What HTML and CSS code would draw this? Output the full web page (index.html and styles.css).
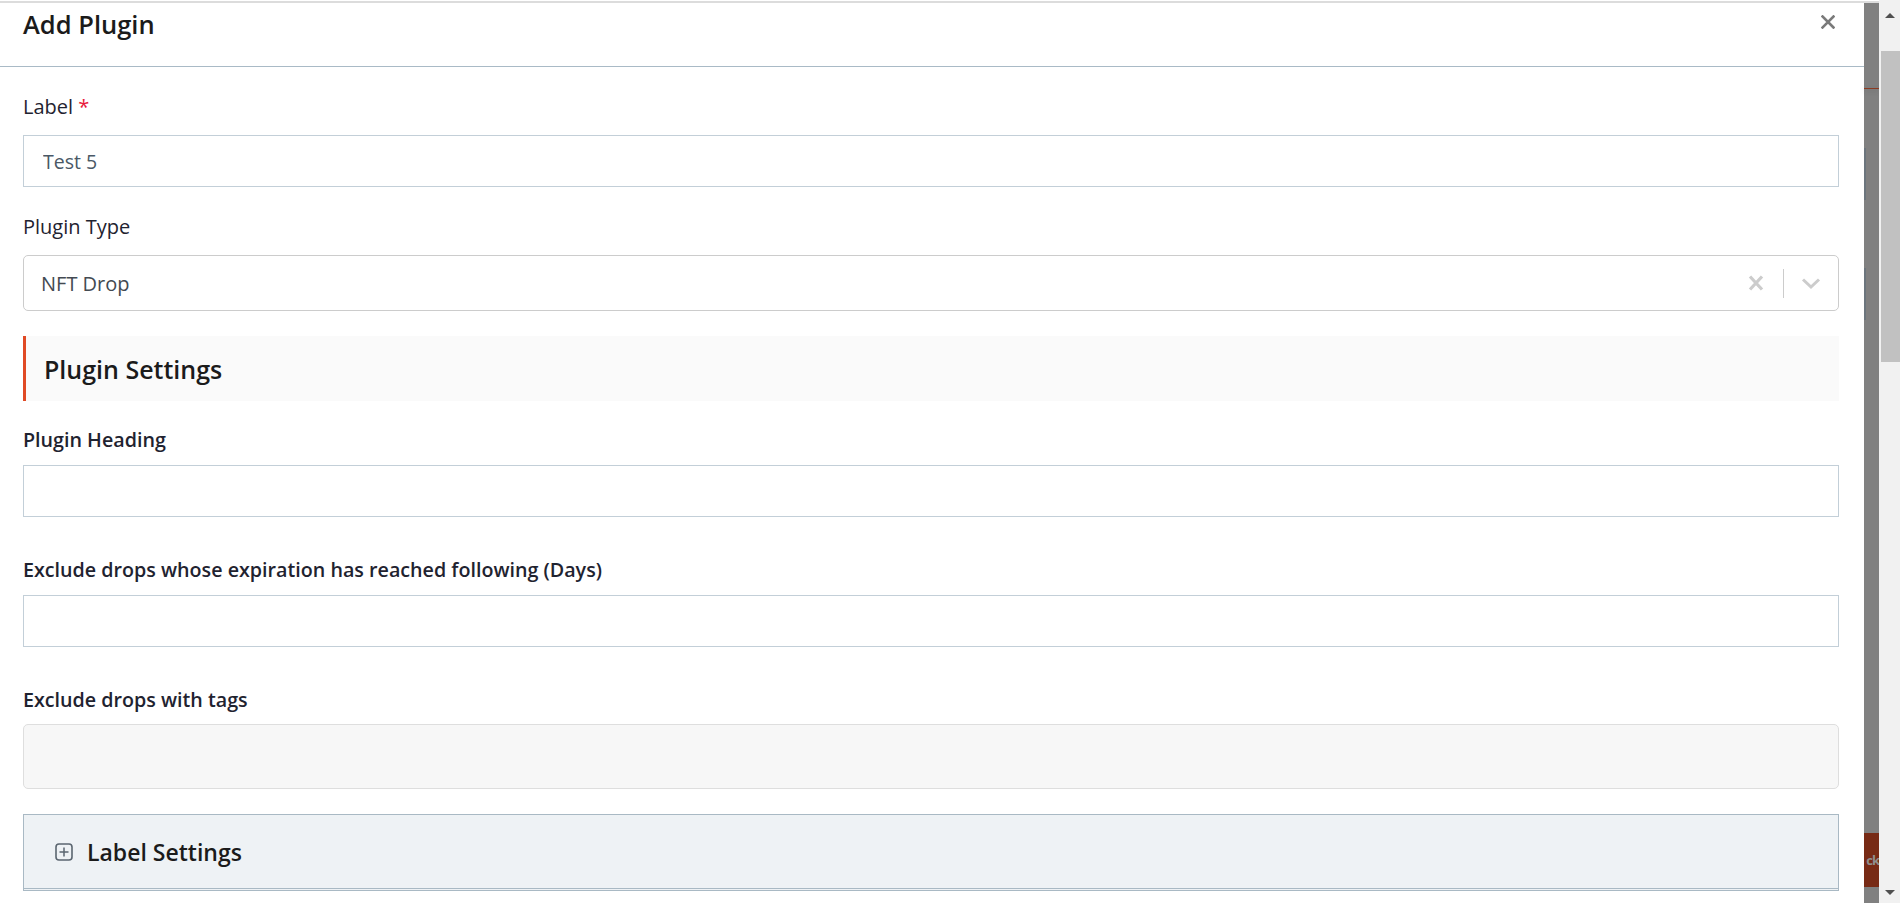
FILE: index.html
```html
<!DOCTYPE html>
<html lang="en">
<head>
    <meta charset="UTF-8">
    <meta name="viewport" content="width=device-width, initial-scale=1.0">
    <title>Add Plugin</title>
    <link rel="stylesheet" href="styles.css">
</head>
<body>
    <div class="screen">
        <div class="viewport">
            <div class="topline"></div>
            <div class="stage">
                <div class="modal">
                    <div class="modal-header">
                        <h5 class="modal-title">Add Plugin</h5>
                        <button type="button" class="close" aria-label="Close">
                            <svg width="14" height="14" viewBox="0 0 14 14"><path d="M1.5 1.5 L12.5 12.5 M12.5 1.5 L1.5 12.5" stroke="#7a7a7a" stroke-width="2.6" stroke-linecap="square"/></svg>
                        </button>
                    </div>

                    <div class="modal-body">
                        <div class="field">
                            <label for="label">Label <span class="required">*</span></label>
                            <input type="text" id="label" class="form-control" value="Test 5">
                        </div>

                        <div class="field">
                            <label>Plugin Type</label>
                            <div class="select">
                                <div class="select-value">NFT Drop</div>
                                <div class="select-indicators">
                                    <svg width="20" height="20" viewBox="0 0 20 20"><path d="M4 3.5 L16 16.5 M16 3.5 L4 16.5" stroke="#cccccc" stroke-width="3.2"/></svg>
                                    <span class="select-sep"></span>
                                    <svg width="20" height="20" viewBox="0 0 20 20"><path d="M2 6.5 L10 14 L18 6.5" fill="none" stroke="#cccccc" stroke-width="3"/></svg>
                                </div>
                            </div>
                        </div>

                        <div class="section-title">Plugin Settings</div>

                        <div class="settings">
                            <div class="field setting">
                                <label for="heading">Plugin Heading</label>
                                <input type="text" id="heading" class="form-control">
                            </div>
                            <div class="field setting">
                                <label for="days">Exclude drops whose expiration has reached following (Days)</label>
                                <input type="text" id="days" class="form-control">
                            </div>
                            <div class="field setting">
                                <label>Exclude drops with tags</label>
                                <div class="tags-box"></div>
                            </div>
                        </div>

                        <div class="panel">
                            <svg class="panel-icon" width="18" height="18" viewBox="0 0 18 18"><rect x="1" y="1" width="16" height="16" rx="3" fill="none" stroke="#5b6670" stroke-width="1.6"/><path d="M9 4.5 V13.5 M4.5 9 H13.5" stroke="#5b6670" stroke-width="1.5"/></svg>
                            <span class="panel-title">Label Settings</span>
                        </div>
                    </div>
                </div>

                <!-- pagina de fondo tapada por el overlay -->
                <div class="backdrop">
                    <div class="bg-rule"></div>
                    <div class="bg-box first"></div>
                    <div class="bg-box"></div>
                    <div class="bg-button"><span>ck</span></div>
                </div>
            </div>
        </div>

        <div class="scrollbar">
            <div class="sb-arrow up"></div>
            <div class="sb-thumb"></div>
            <div class="sb-track"></div>
            <div class="sb-arrow down"></div>
        </div>
    </div>
</body>
</html>
```

FILE: styles.css
```css
/* Estilos del modal "Add Plugin" */
body {
    margin: 0;
    padding: 0;
    overflow: hidden;
    font-family: "Open Sans", "Noto Sans", Arial, sans-serif;
    color: #1f2330;
    background: #fff;
}
.screen {
    display: flex;
    width: 1900px;
    height: 903px;
}
.viewport {
    width: 1879px;
    flex: none;
    display: flex;
    flex-direction: column;
}
.topline {
    height: 3px;
    box-sizing: border-box;
    border-top: 1px solid #fff;
    background: #dcdcdc;
}
.stage {
    flex: 1;
    display: flex;
    overflow: hidden;
}
.modal {
    width: 1864px;
    flex: none;
    background: #fff;
}
.modal-header {
    display: flex;
    justify-content: space-between;
    align-items: flex-start;
    height: 63px;
    box-sizing: content-box;
    padding: 0 29px 0 23px;
    border-bottom: 1px solid #a9bac6;
}
.modal-title {
    margin: 6px 0 0;
    font-size: 25.5px;
    line-height: 30px;
    font-weight: 600;
    color: #1b1b1b;
}
.close {
    margin-top: 12px;
    padding: 0;
    border: none;
    background: none;
    line-height: 0;
    cursor: pointer;
}
.modal-body {
    padding: 25px 25px 0 23px;
}
.field {
    margin-bottom: 25px;
}
label {
    display: block;
    margin-bottom: 13px;
    font-size: 20px;
    line-height: 30px;
    color: #1f2330;
}
.required {
    color: #e8173a;
}
.form-control {
    display: block;
    width: 100%;
    height: 52px;
    box-sizing: border-box;
    margin: 0;
    padding: 0 19px;
    border: 1px solid #c3cfd8;
    border-radius: 0;
    font-family: inherit;
    font-size: 19.5px;
    color: #4a5866;
    outline: none;
}
.select {
    display: flex;
    align-items: center;
    height: 56px;
    box-sizing: border-box;
    border: 1px solid #cccccc;
    border-radius: 5px;
}
.select-value {
    flex: 1;
    padding-left: 17px;
    font-size: 20px;
    color: #434a52;
}
.select-indicators {
    display: flex;
    align-items: center;
    gap: 17px;
    padding-right: 17px;
}
.select-sep {
    width: 1px;
    height: 29px;
    background: #cccccc;
}
.section-title {
    height: 65px;
    box-sizing: border-box;
    display: flex;
    align-items: center;
    padding-left: 18px;
    margin-bottom: 24px;
    border-left: 3px solid #e04a25;
    background: #fafafa;
    font-size: 25px;
    font-weight: 600;
    color: #1b1b1b;
}
.setting {
    margin-bottom: 38px;
}
.setting label {
    font-size: 19.7px;
    font-weight: 600;
    margin-bottom: 10px;
}
.setting:last-child {
    margin-bottom: 25px;
}
.setting:last-child label {
    margin-bottom: 9px;
}
.tags-box {
    height: 65px;
    box-sizing: border-box;
    border: 1px solid #dedede;
    border-radius: 5px;
    background: #f7f7f7;
}
.panel {
    display: flex;
    align-items: center;
    height: 77px;
    box-sizing: border-box;
    padding-left: 31px;
    border: 1px solid #a9b9c4;
    border-bottom: 3px double #a9b9c4;
    background: #eef2f5;
}
.panel-icon {
    margin-right: 14px;
}
.panel-title {
    font-size: 23px;
    font-weight: 600;
    color: #1b1b1b;
}

/* fondo oscurecido */
.backdrop {
    width: 15px;
    flex: none;
    display: flex;
    flex-direction: column;
    background: #808080;
}
.bg-rule {
    height: 1px;
    margin-top: 85px;
    background: #8c3b22;
    box-shadow: 0 2px 4px rgba(60, 60, 60, 0.35);
}
.bg-box {
    height: 52px;
    margin-top: 68px;
    border-left: 2px solid #6c757d;
}
.bg-box.first {
    margin-top: 59px;
}
.bg-button {
    height: 54px;
    margin-top: 513px;
    display: flex;
    justify-content: flex-end;
    align-items: center;
    white-space: nowrap;
    background: #772a15;
    font-size: 13px;
    font-weight: 700;
    letter-spacing: -1px;
    color: #8f8f8f;
}

/* barra de desplazamiento */
.scrollbar {
    width: 21px;
    flex: none;
    display: flex;
    flex-direction: column;
    background: #f1f1f1;
}
.sb-arrow {
    height: 30px;
    display: flex;
    justify-content: center;
    align-items: center;
}
.sb-arrow::after {
    content: "";
    border-left: 5px solid transparent;
    border-right: 5px solid transparent;
}
.sb-arrow.up::after {
    border-bottom: 5px solid #505050;
}
.sb-arrow.down::after {
    border-top: 5px solid #505050;
}
.sb-thumb {
    height: 311px;
    margin: 21px 0 0 2px;
    background: #c1c1c1;
}
.sb-track {
    flex: 1;
}
.sb-arrow.down {
    height: 22px;
}
```
